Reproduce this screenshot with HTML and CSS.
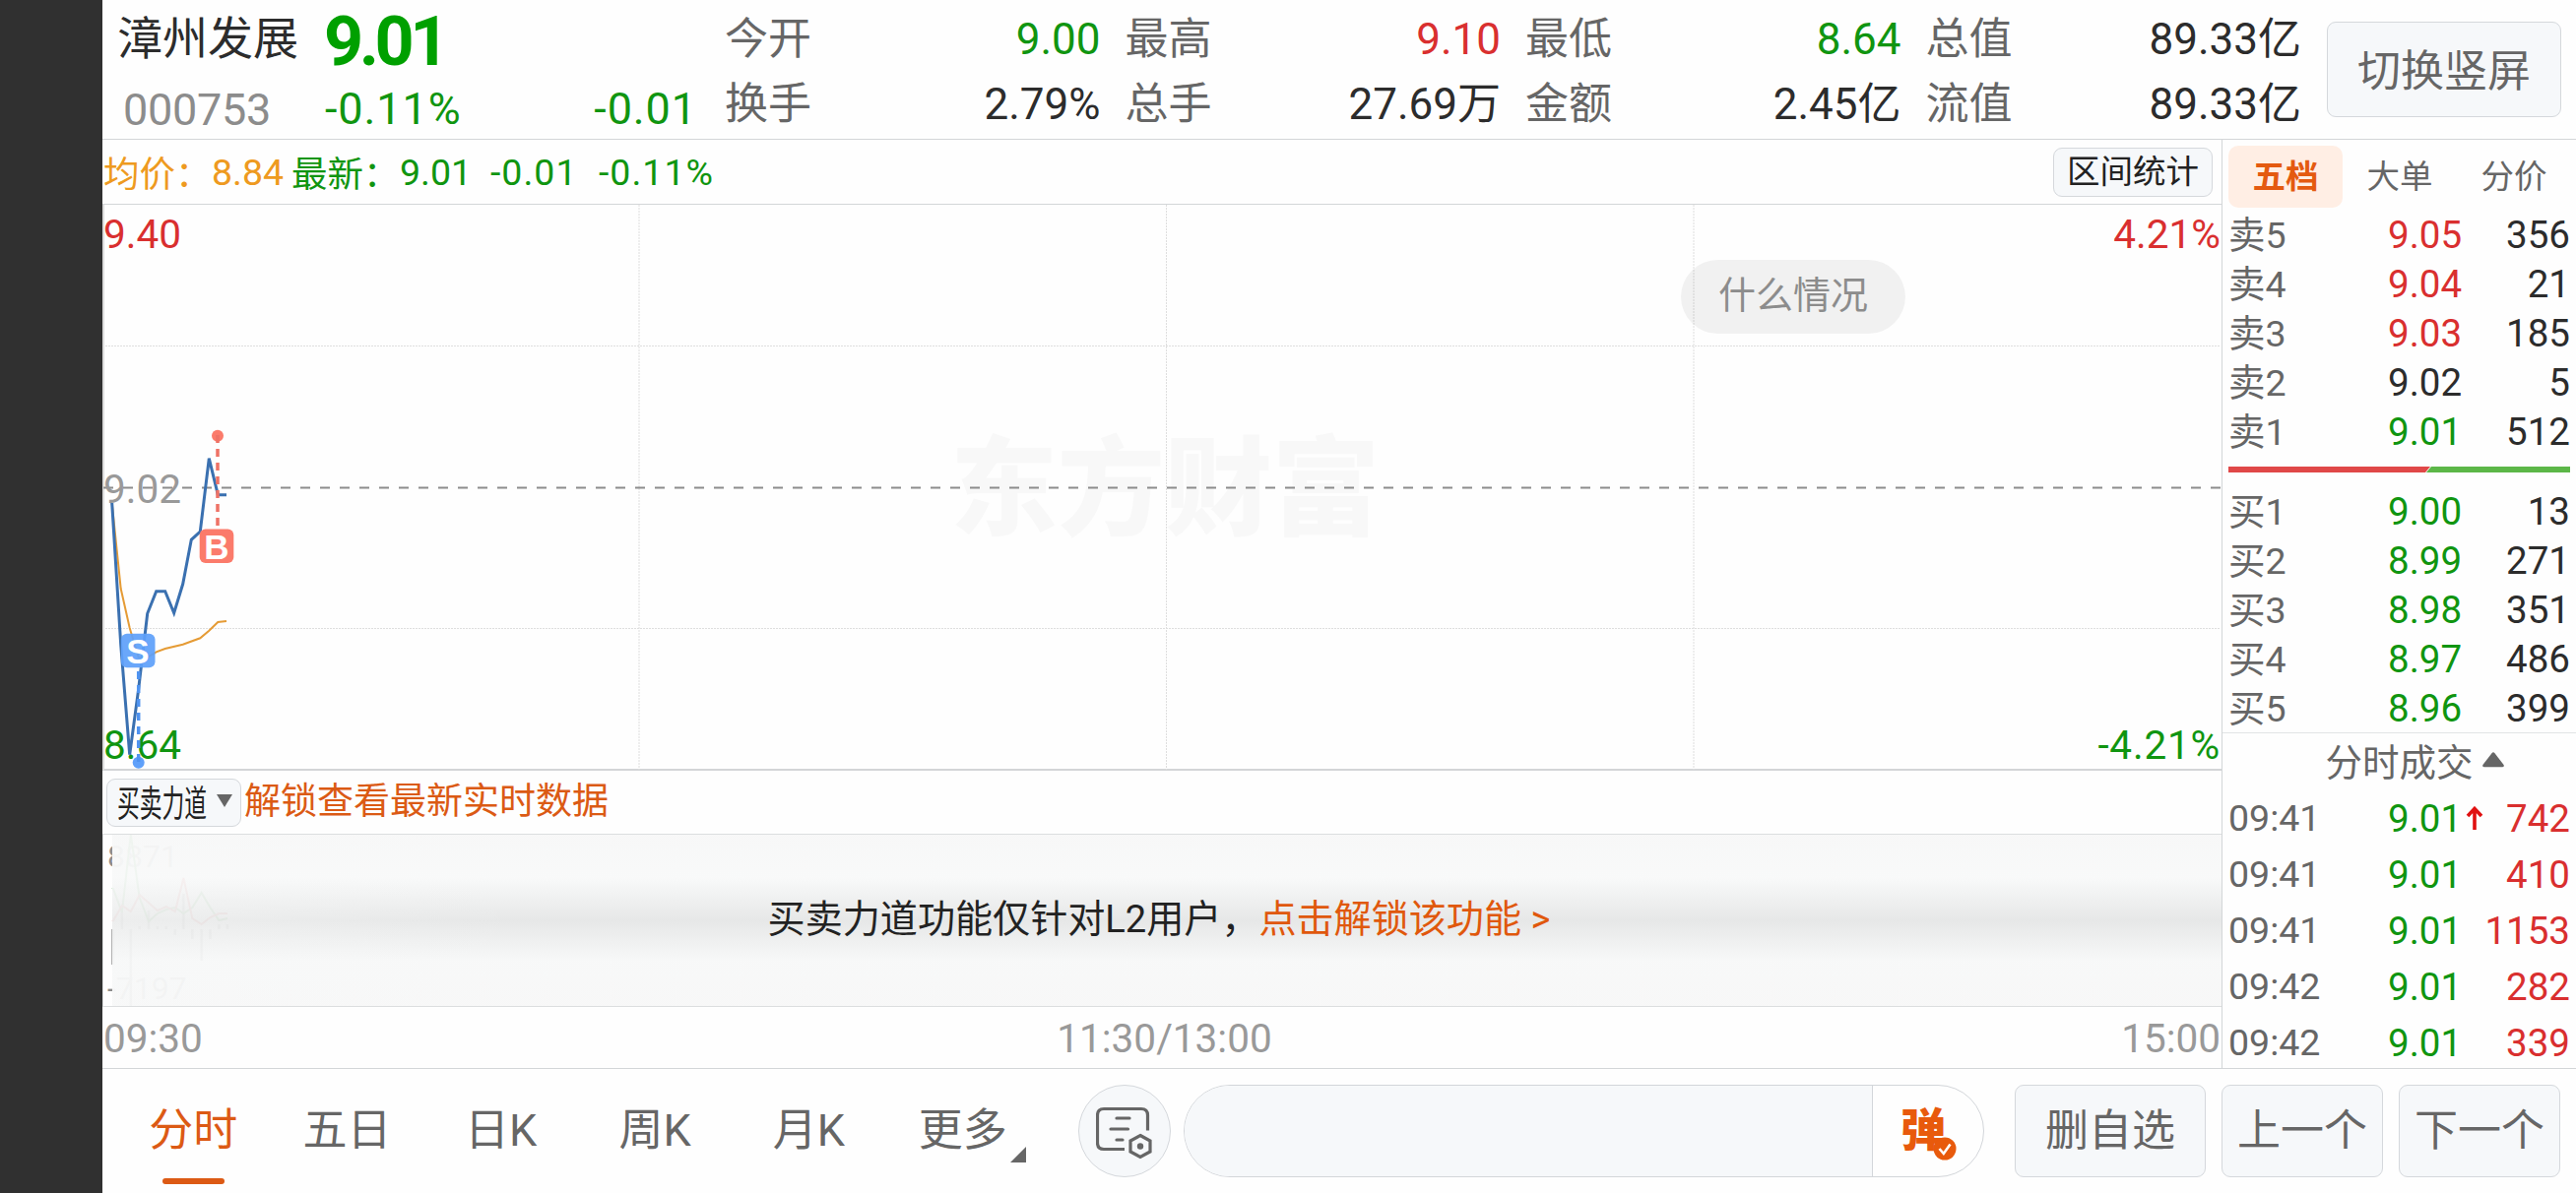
FILE: index.html
```html
<!DOCTYPE html>
<html lang="zh-CN">
<head>
    <meta charset="UTF-8" />
    <meta name="viewport" content="width=device-width, initial-scale=1.0"/>
    <title>漳州发展 000753</title>
    <link rel="stylesheet" href="styles.css">
</head>
<body>
    <div class="notch"></div>
    <div class="app">
        <header class="header">
            <div class="stock">
                <div class="stock-name">漳州发展</div>
                <div class="stock-price down">9.01</div>
                <div class="stock-code">000753</div>
                <div class="stock-change down"><span>-0.11%</span><span>-0.01</span></div>
            </div>
            <div class="quotes">
                <div class="quote"><span class="label">今开</span><span class="down">9.00</span></div>
                <div class="quote"><span class="label">最高</span><span class="up">9.10</span></div>
                <div class="quote"><span class="label">最低</span><span class="down">8.64</span></div>
                <div class="quote"><span class="label">总值</span><span>89.33亿</span></div>
                <div class="quote"><span class="label">换手</span><span>2.79%</span></div>
                <div class="quote"><span class="label">总手</span><span>27.69万</span></div>
                <div class="quote"><span class="label">金额</span><span>2.45亿</span></div>
                <div class="quote"><span class="label">流值</span><span>89.33亿</span></div>
            </div>
            <button class="btn rotate-btn">切换竖屏</button>
        </header>

        <main class="main">
            <section class="charts">
                <div class="info-bar">
                    <span class="avg-label avg">均价：</span>
                    <span class="avg-value avg">8.84</span>
                    <span class="last-label down">最新：</span>
                    <span class="last-value down">9.01</span>
                    <span class="last-diff down">-0.01</span>
                    <span class="last-pct down">-0.11%</span>
                    <button class="btn range-btn">区间统计</button>
                </div>

                <div class="price-chart">
                    <svg width="2152" height="575" viewBox="0 0 2152 575">
                        <text class="watermark" x="1079" y="327" text-anchor="middle">东方财富</text>
                        <g class="grid">
                            <path d="M0 143.5H2151M0 430.5H2151"/>
                            <path d="M545 0V574M1080.5 0V574M1616 0V574"/>
                        </g>
                        <path class="axis" d="M1 0V574"/>
                        <path class="prev-close" d="M1 287.5H2151"/>
                        <text class="tick up" x="1" y="44">9.40</text>
                        <text class="tick flat" x="1" y="303">9.02</text>
                        <text class="tick down" x="1" y="563">8.64</text>
                        <text class="tick up" x="2151" y="44" text-anchor="end">4.21%</text>
                        <text class="tick down wide" x="2151" y="563" text-anchor="end">-4.21%</text>

                        <polyline class="avg-line" points="9.7,303 18.7,390 27.7,430 36.7,460 46,459.7 54.7,454.3 63.7,451 81.7,446.7 99.3,440.3 108.3,432.7 117.3,424 126,423"/>
                        <polyline class="price-line" points="9.7,303 18.7,447 27.7,558.7 36.7,492 45.7,415.3 54.7,392.7 63.7,392.7 72.7,414.7 81.7,385.3 90.3,340.3 99.3,332 108.3,257.7 117.3,294.7 126,294.7"/>

                        <!-- buy / sell marks -->
                        <g class="mark-buy">
                            <circle cx="117" cy="234.7" r="6"/>
                            <path d="M117 234V328"/>
                            <rect x="98.7" y="329.5" width="34.6" height="34.6" rx="6"/>
                            <text x="116" y="359.5" text-anchor="middle">B</text>
                        </g>
                        <g class="mark-sell">
                            <circle cx="36.7" cy="566.7" r="6"/>
                            <path d="M36.7 566V472"/>
                            <rect x="18.9" y="435.7" width="34.6" height="34.6" rx="6"/>
                            <text x="36" y="465.7" text-anchor="middle">S</text>
                        </g>
                    </svg>
                    <div class="bubble">什么情况</div>
                </div>

                <div class="indicator-bar">
                    <button class="btn indicator-btn"><span class="narrow">买卖力道</span><i class="caret-down"></i></button>
                    <span class="unlock">解锁查看最新实时数据</span>
                </div>

                <div class="force-chart">
                    <svg width="2152" height="174" viewBox="0 0 2152 174">
                        <text class="force-tick" x="4" y="33">8871</text>
                        <text class="force-tick" x="4" y="167">-7197</text>
                        <path class="force-bars" d="M9.6 96V132M18.9 96V79M27.8 96V174M36.7 96V93M46 96V77M54.9 96V93M63.9 96V93M72.8 96V102M81.4 96V60M90.3 96V106M99.6 96V128M108.5 96V106M117.4 96V91M126 96V91"/>
                        <polyline class="force-sell" points="9.6,54 18.9,79 27.8,0 36.7,64 46,88 54.9,80 63.9,76 72.8,74 81.4,80 90.3,74 99.6,59 108.5,74 117.4,87 126,85"/>
                        <polyline class="force-buy" points="9.6,88 18.9,72 27.8,78 36.7,61 54.9,77 63.9,73 72.8,78 81.4,44 90.3,85 99.6,91 108.5,84 117.4,80 126,80"/>
                    </svg>
                    <div class="mask">
                        <span>买卖力道功能仅针对L2用户，</span><a>点击解锁该功能 &gt;</a>
                    </div>
                </div>

                <div class="time-axis">
                    <span>09:30</span>
                    <span>11:30/13:00</span>
                    <span>15:00</span>
                </div>
            </section>

            <aside class="sidebar">
                <div class="side-tabs">
                    <span class="side-tab active">五档</span>
                    <span class="side-tab">大单</span>
                    <span class="side-tab">分价</span>
                </div>
                <div class="levels">
                    <div class="level"><span class="label">卖5</span><span class="up">9.05</span><span>356</span></div>
                    <div class="level"><span class="label">卖4</span><span class="up">9.04</span><span>21</span></div>
                    <div class="level"><span class="label">卖3</span><span class="up">9.03</span><span>185</span></div>
                    <div class="level"><span class="label">卖2</span><span>9.02</span><span>5</span></div>
                    <div class="level"><span class="label">卖1</span><span class="down">9.01</span><span>512</span></div>
                </div>
                <svg class="ratio" width="347" height="6" viewBox="0 0 347 6">
                    <path fill="#e04848" d="M0 0H205L200 6H0z"/>
                    <path fill="#5cb748" d="M206 0H347V6H201z"/>
                </svg>
                <div class="levels">
                    <div class="level"><span class="label">买1</span><span class="down">9.00</span><span>13</span></div>
                    <div class="level"><span class="label">买2</span><span class="down">8.99</span><span>271</span></div>
                    <div class="level"><span class="label">买3</span><span class="down">8.98</span><span>351</span></div>
                    <div class="level"><span class="label">买4</span><span class="down">8.97</span><span>486</span></div>
                    <div class="level"><span class="label">买5</span><span class="down">8.96</span><span>399</span></div>
                </div>
                <div class="deals-title">分时成交
                    <svg width="22" height="16" viewBox="0 0 22 16"><path d="M9.5 1.2Q11-.6 12.5 1.2L21.6 13Q22.400 15.300 20 15.300H2Q-.4 15.300 .4 13z" fill="#666"/></svg>
                </div>
                <div class="deals">
                    <div class="level"><span class="label">09:41</span><span class="down">9.01<svg class="arrow" width="18" height="25" viewBox="0 0 18 25"><path d="M9 24V3M2 10L9 2.500L16 10" fill="none" stroke="#e01010" stroke-width="3.600"/></svg></span><span class="up">742</span></div>
                    <div class="level"><span class="label">09:41</span><span class="down">9.01</span><span class="up">410</span></div>
                    <div class="level"><span class="label">09:41</span><span class="down">9.01</span><span class="up">1153</span></div>
                    <div class="level"><span class="label">09:42</span><span class="down">9.01</span><span class="up">282</span></div>
                    <div class="level"><span class="label">09:42</span><span class="down">9.01</span><span class="up">339</span></div>
                </div>
            </aside>
        </main>

        <footer class="footer">
            <nav class="periods">
                <span class="period active">分时</span>
                <span class="period">五日</span>
                <span class="period">日K</span>
                <span class="period">周K</span>
                <span class="period">月K</span>
                <span class="period more">更多</span>
            </nav>
            <div class="round-btn">
                <svg width="58" height="54" viewBox="0 0 58 54" fill="none" stroke="#666" stroke-width="3.200">
                    <path d="M52.500 24.500V9Q52.500 2.500 46 2.500H8Q1.500 2.500 1.500 9V37Q1.500 43.500 8 43.500H29"/>
                    <path d="M21 12H34M15 23H32.500M21 34H27" stroke-linecap="round"/>
                    <path d="M45 29.500L55 35V46L45 51.500L35 46V35z"/>
                    <circle cx="45" cy="40.500" r="3.200" fill="#666" stroke="none"/>
                </svg>
            </div>
            <div class="comment">
                <div class="comment-input"></div>
                <div class="danmu">弹
                    <svg width="24" height="24" viewBox="0 0 24 24">
                        <circle cx="12" cy="12" r="11.500" fill="#e85a0c"/>
                        <path d="M6.500 12L10.800 17L17.500 7.500" fill="none" stroke="#fff" stroke-width="2.600"/>
                    </svg>
                </div>
            </div>
            <button class="btn foot-btn wide">删自选</button>
            <button class="btn foot-btn">上一个</button>
            <button class="btn foot-btn">下一个</button>
        </footer>
    </div>
</body>
</html>
```
FILE: styles.css
```css
* {
    margin: 0;
    padding: 0;
    box-sizing: border-box;
}

body {
    font-family: Roboto, 'Noto Sans CJK SC', sans-serif;
    display: flex;
    width: 2616px;
    height: 1212px;
    overflow: hidden;
    background: #fefefe;
    color: #2c2c2c;
}

svg {
    display: block;
}

.up { color: #d92f2f; fill: #d92f2f; }
.down { color: #109510; fill: #109510; }
.avg { color: #ee9a20; }
.label { color: #666; }

.btn {
    font-family: inherit;
    background: #f6f8fa;
    border: 1.5px solid #d5d8dc;
    border-radius: 9px;
    color: #666;
    white-space: nowrap;
}

.notch {
    width: 104px;
    flex-shrink: 0;
    background: #303030;
}

.app {
    flex: 1;
    display: flex;
    flex-direction: column;
    min-width: 0;
}

/* header */
.header {
    display: flex;
    height: 142px;
    border-bottom: 1px solid #d3d6d8;
}

.stock {
    display: grid;
    grid-template-columns: 210px 379px;
    grid-template-rows: 76px 65px;
    width: 617px;
    padding-left: 15px;
    font-size: 45px;
    line-height: 72px;
}

.stock-name {
    font-size: 46px;
    line-height: 78px;
}

.stock-price {
    font-size: 70px;
    font-weight: 700;
    line-height: 84px;
    letter-spacing: -4.5px;
    color: #00a000;
}

.stock-code {
    padding-left: 6px;
    color: #8c8c8c;
    letter-spacing: -0.3px;
}

.stock-change {
    display: flex;
    justify-content: space-between;
    padding-left: 1px;
    line-height: 70px;
    letter-spacing: 0.9px;
}

.quotes {
    display: grid;
    grid-template-columns: repeat(4, 406.5px);
    grid-template-rows: 66px 66px;
    padding-top: 7px;
    margin-left: 15px;
}

.quote {
    display: flex;
    justify-content: space-between;
    padding-right: 25px;
    font-size: 44px;
    line-height: 66px;
}

.rotate-btn {
    width: 238px;
    height: 97px;
    padding-bottom: 3px;
    margin-top: 22px;
    font-size: 44px;
    margin-left: auto;
    margin-right: 15px;
}

/* main area */
.main {
    display: flex;
    height: 943px;
}

.charts {
    width: 2152px;
}

.info-bar {
    display: flex;
    align-items: center;
    height: 66px;
    padding: 0 9px 0 1px;
    border-bottom: 1px solid #d3d6d8;
    font-size: 37.5px;
}

.avg-label { width: 110px; }
.avg-value { width: 81px; }
.last-label { width: 110px; }
.last-value { width: 92px; }
.last-diff { width: 110px; }

.last-diff,
.last-pct {
    letter-spacing: 1px;
}

.avg-label,
.last-label {
    font-size: 36.5px;
    white-space: nowrap;
}

.range-btn {
    width: 162px;
    height: 50px;
    margin-left: auto;
    font-size: 33.5px;
    line-height: 46px;
    color: #222;
}

.price-chart {
    position: relative;
    height: 575px;
    border-bottom: 2px solid #d3d5d7;
}

.watermark {
    font-size: 109px;
    font-weight: 900;
    fill: #f8f8f8;
}

.grid path {
    stroke: #dedede;
    stroke-width: 1;
    stroke-dasharray: 2 1;
    fill: none;
}

.axis {
    stroke: #dcdcdc;
    stroke-width: 2;
}

.prev-close {
    stroke: #8c8c8c;
    stroke-width: 2;
    stroke-dasharray: 10 10;
}

.tick {
    font-size: 40.5px;
}

.tick.wide { letter-spacing: 0.8px; }

.flat { fill: #999; }

.avg-line,
.price-line {
    fill: none;
    stroke: #e59b35;
    stroke-width: 2;
}

.price-line {
    stroke: #3a70b0;
    stroke-width: 3;
}

.mark-buy circle,
.mark-buy rect { fill: #fb7b6b; }
.mark-sell circle { fill: #5fa0fa; }
.mark-sell rect { fill: #5fa0fa; fill-opacity: 0.93; }

.mark-buy path,
.mark-sell path {
    stroke: #ee7266;
    stroke-width: 3.5;
    stroke-dasharray: 8 6;
}

.mark-sell path { stroke: #4f93f0; }

.mark-buy text,
.mark-sell text {
    font-family: 'Liberation Sans', sans-serif;
    font-size: 35px;
    font-weight: 700;
    fill: #fff;
}

.bubble {
    position: absolute;
    left: 1603px;
    top: 56px;
    width: 228px;
    height: 75px;
    border-radius: 38px;
    background: rgba(0, 0, 0, 0.05);
    color: #8c8c8c;
    font-size: 38px;
    line-height: 73px;
    text-align: center;
}

.indicator-bar {
    display: flex;
    align-items: center;
    gap: 3px;
    height: 64px;
    padding: 0 4px;
}

.indicator-btn {
    display: flex;
    align-items: center;
    justify-content: space-between;
    width: 137px;
    height: 49px;
    padding: 0 8px 3px 10px;
    border-width: 1px;
    color: #222;
    font-size: 37px;
}

.narrow {
    width: 92px;
    transform: scaleX(0.615);
    transform-origin: left;
}

.caret-down {
    border: 8px solid transparent;
    border-top: 13px solid #666;
    border-bottom: 0;
}

.unlock {
    color: #db5a14;
    font-size: 37px;
    line-height: 60px;
}

.force-chart {
    position: relative;
    height: 176px;
    border: 1px solid #dcdedf;
    border-right: 0;
}

.force-tick {
    font-size: 32px;
    fill: #8c8c8c;
}

.force-bars { stroke: #888; stroke-width: 2.5; }
.force-sell, .force-buy { fill: none; stroke: #2a9a2a; stroke-width: 2; }
.force-buy { stroke: #d93030; }

/* frosted layer for users without L2 */
.mask {
    position: absolute;
    left: 9px;
    top: 0;
    right: 0;
    bottom: 0;
    display: flex;
    align-items: center;
    justify-content: center;
    padding-right: 16px;
    padding-bottom: 10px;
    background:
        linear-gradient(90deg, rgba(248, 249, 249, 0.35), rgba(248, 249, 249, 0) 420px),
        linear-gradient(rgba(247, 247, 247, 0.94), rgba(248, 249, 249, 0.94) 25%, rgba(229, 230, 230, 0.94) 50%, rgba(247, 248, 248, 0.94) 74%, rgba(247, 247, 247, 0.94));
    font-size: 38.1px;
    color: #222;
}

.mask a { color: #e0580c; }

.time-axis {
    display: flex;
    justify-content: space-between;
    padding: 0 1px;
    font-size: 40.5px;
    line-height: 64px;
    color: #999;
}

.time-axis span:nth-child(2) {
    padding-left: 5px;
}

/* order book */
.sidebar {
    width: 360px;
    border-left: 1px solid #d3d6d8;
}

.side-tabs {
    display: flex;
    padding: 6px 0 0 6px;
}

.side-tab {
    width: 116px;
    height: 63px;
    border-radius: 10px;
    color: #666;
    font-size: 33.5px;
    line-height: 63px;
    text-align: center;
}

.side-tab.active {
    background: #ffeee4;
    color: #e45a10;
    font-weight: 700;
}

.levels {
    padding-top: 3px;
}

.level {
    display: grid;
    grid-template-columns: 162px 90px 1fr;
    padding: 0 6px;
    font-size: 38.5px;
    line-height: 50px;
}

.level .label {
    font-size: 37.5px;
}

.level span:last-child {
    text-align: right;
}

.ratio {
    margin: 10px 0 12px 6px;
}

.deals-title {
    display: flex;
    align-items: center;
    justify-content: center;
    gap: 9px;
    height: 59px;
    margin-top: -1px;
    padding-left: 31px;
    padding-bottom: 5px;
    border-top: 1px solid #e2e4e5;
    color: #666;
    font-size: 37.5px;
}

.deals .level {
    line-height: 57px;
}

.deals .down {
    display: flex;
    align-items: center;
    gap: 4px;
}

.arrow {
    flex-shrink: 0;
}

/* footer */
.footer {
    display: flex;
    align-items: center;
    height: 127px;
    border-top: 1px solid #d3d6d8;
    padding: 0 16px 0 0;
}

.periods {
    display: flex;
    padding-left: 14px;
    width: 991px;
}

.period {
    position: relative;
    width: 156.3px;
    color: #666;
    font-size: 45px;
    line-height: 128px;
    text-align: center;
}

.period.active { color: #dc5a14; }

.period.active::after {
    content: '';
    position: absolute;
    left: 47px;
    bottom: 10px;
    width: 63px;
    height: 6px;
    border-radius: 3px;
    background: #dc5a14;
}

.more::after {
    content: '';
    position: absolute;
    right: 14px;
    bottom: 32px;
    border-bottom: 16px solid #666;
    border-left: 16px solid transparent;
}

.round-btn {
    display: flex;
    align-items: center;
    justify-content: center;
    width: 94px;
    height: 94px;
    padding-top: 3px;
    border: 1.5px solid #d5d8dc;
    border-radius: 50%;
    background: #f6f8fa;
}

.comment {
    display: flex;
    width: 813px;
    height: 94px;
    margin-left: 13px;
    margin-right: 31px;
    border: 1px solid #d3d6da;
    border-radius: 47px;
    overflow: hidden;
}

.comment-input {
    flex: 1;
    background: #f6f8fa;
    border-right: 1px solid #d3d6da;
}

.danmu {
    position: relative;
    width: 112px;
    padding-left: 28px;
    color: #e85a0c;
    font-size: 46px;
    font-weight: 900;
    line-height: 90px;
}

.danmu svg {
    position: absolute;
    left: 61px;
    top: 52px;
}

.foot-btn {
    width: 164px;
    height: 94px;
    margin-left: 16px;
    font-size: 44px;
    line-height: 90px;
}

.foot-btn.wide {
    width: 194px;
    margin-left: 0;
}
```
